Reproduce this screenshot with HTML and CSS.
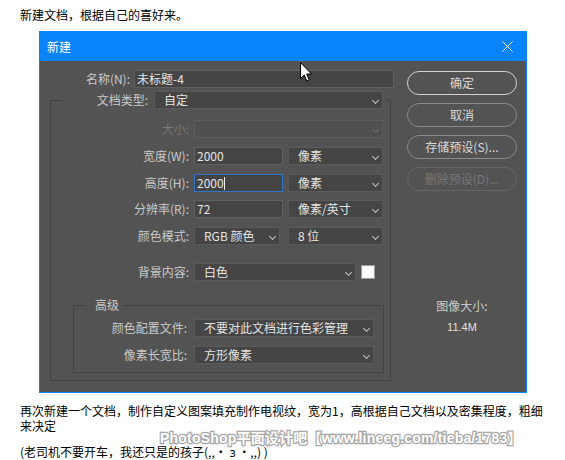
FILE: index.html
```html
<!DOCTYPE html>
<html lang="zh-CN">
<head>
<meta charset="utf-8">
<title>新建</title>
<link rel="stylesheet" href="styles.css">
</head>
<body>
<p class="intro">新建文档，根据自己的喜好来。</p>

<div class="dialog">
  <div class="titlebar">
    <span class="title">新建</span>
    <svg class="close" width="11" height="11" viewBox="0 0 11 11"><path d="M0.5 0.5 L10.5 10.5 M10.5 0.5 L0.5 10.5" stroke="#fff" stroke-width="1" fill="none"/></svg>
  </div>
  <div class="dlg-body">
    <div class="main">
      <div class="row name-row">
        <span class="lbl lbl-name">名称(N):</span>
        <div class="field input name-input">未标题-4</div>
      </div>

      <fieldset class="preset">
        <legend class="legend-row">
          <span class="lbl lbl-type">文档类型:</span>
          <div class="field select type-select">自定<i class="chev"></i></div>
        </legend>

        <div class="rows">
          <div class="row">
            <span class="lbl lbl-in disabled-text">大小:</span>
            <div class="field select disabled size-select"><i class="chev"></i></div>
          </div>
          <div class="row">
            <span class="lbl lbl-in">宽度(W):</span>
            <div class="field input num">2000</div>
            <div class="field select unit">像素<i class="chev"></i></div>
          </div>
          <div class="row">
            <span class="lbl lbl-in">高度(H):</span>
            <div class="field input num focus">2000<span class="caret"></span></div>
            <div class="field select unit">像素<i class="chev"></i></div>
          </div>
          <div class="row">
            <span class="lbl lbl-in">分辨率(R):</span>
            <div class="field input num">72</div>
            <div class="field select unit">像素/英寸<i class="chev"></i></div>
          </div>
          <div class="row">
            <span class="lbl lbl-in">颜色模式:</span>
            <div class="field select mode">RGB 颜色<i class="chev"></i></div>
            <div class="field select unit">8 位<i class="chev"></i></div>
          </div>
        </div>

        <div class="row bg-row">
          <span class="lbl lbl-in">背景内容:</span>
          <div class="field select bg-select">白色<i class="chev"></i></div>
          <span class="swatch"></span>
        </div>

        <fieldset class="adv">
          <legend class="adv-legend">高级</legend>
          <div class="row">
            <span class="lbl lbl-adv">颜色配置文件:</span>
            <div class="field select adv-select">不要对此文档进行色彩管理<i class="chev"></i></div>
          </div>
          <div class="row">
            <span class="lbl lbl-adv">像素长宽比:</span>
            <div class="field select adv-select">方形像素<i class="chev"></i></div>
          </div>
        </fieldset>
      </fieldset>
    </div>

    <div class="side">
      <div class="btn primary">确定</div>
      <div class="btn">取消</div>
      <div class="btn">存储预设(S)...</div>
      <div class="btn disabled">删除预设(D)...</div>
      <div class="img-size">
        <span class="img-size-lbl">图像大小:</span>
        <span class="img-size-val">11.4M</span>
      </div>
    </div>
  </div>
</div>

<div class="notes">
  <p class="note1">再次新建一个文档，制作自定义图案填充制作电视纹，宽为1，高根据自己文档以及密集程度，粗细来决定</p>
  <p class="note2">(老司机不要开车，我还只是的孩子(,,• з •,,) )</p>
</div>

<div class="watermark">PhotoShop平面设计吧【www.lineeg.com/tieba/1783】</div>

<svg class="pointer" width="13" height="20" viewBox="0 0 13 20">
  <path d="M0.5 0.5 L0.5 16.5 L4.2 13 L6.8 19 L9.2 18 L6.7 12 L11.5 12 Z" fill="#fff" stroke="#000" stroke-width="1" stroke-linejoin="round"/>
</svg>
</body>
</html>
```

FILE: styles.css
```css
* { box-sizing: border-box; }

body {
  margin: 0;
  width: 565px;
  height: 460px;
  overflow: hidden;
  position: relative;
  background: #fff;
  font-family: "Noto Sans CJK SC", "Liberation Sans", sans-serif;
  font-size: 12px;
  color: #000;
}

.intro {
  margin: 7px 0 0 20px;
  line-height: 16px;
}

.dialog {
  margin: 8px 0 0 39px;
  width: 488px;
  height: 362px;
  border: 1px solid #0a84fb;
  background: #535353;
  display: flex;
  flex-direction: column;
}

.titlebar {
  height: 29px;
  flex: none;
  background: #0a84fb;
  display: flex;
  align-items: center;
  justify-content: space-between;
  padding: 0 13px 0 7px;
}

.title {
  color: #fff;
  font-size: 12px;
  line-height: 14px;
}

.close { display: block; }

.dlg-body {
  flex: 1;
  display: flex;
  padding: 9px 9px 0 0;
}

.main {
  width: 354px;
  flex: none;
}

.row {
  display: flex;
  align-items: center;
  height: 18px;
  gap: 5px;
}

.lbl {
  flex: none;
  text-align: right;
  color: #c9c9c9;
  line-height: 14px;
  white-space: nowrap;
}

.disabled-text { color: #777; }

.lbl-name { width: 90px; }
.name-row { gap: 4px; }
.name-input { width: 260px; padding-left: 3px; }

.field {
  position: relative;
  height: 18px;
  border: 1px solid #606060;
  background: #444;
  color: #e4e4e4;
  line-height: 16px;
  white-space: nowrap;
  font-size: 12px;
}

.input { padding-left: 2px; }
.select {
  padding-left: 9px;
  border-color: #5a5a5a;
  background: #454545;
}

.select.disabled {
  background: #505050;
  border-color: #5c5c5c;
}

.chev {
  position: absolute;
  right: 4px;
  top: 6px;
  width: 5px;
  height: 5px;
  border-right: 1px solid #c2c2c2;
  border-bottom: 1px solid #c2c2c2;
  transform: rotate(45deg);
  transform-origin: center;
}

.disabled .chev { border-color: #6c6c6c; }

.focus { border-color: #2f74c7; }

.caret {
  display: inline-block;
  width: 1px;
  height: 13px;
  background: #f0f0f0;
  vertical-align: -2px;
}

/* preset fieldset */
.preset {
  margin: 3px 0 0 10px;
  padding: 11px 0 7px 0;
  width: 341px;
  border: 1px solid #434343;
  min-width: 0;
}

.legend-row {
  margin-left: 11px;
  padding: 0 4px 0 0;
  width: 325px;
  display: flex;
  align-items: center;
  gap: 6px;
  height: 18px;
}

.lbl-type { width: 86px; }
.type-select { width: 229px; }

.rows {
  display: flex;
  flex-direction: column;
  gap: 8.75px;
}

.lbl-in { width: 138px; }
.size-select { width: 189px; }
.num { width: 89px; }
.unit { width: 95px; }
.mode { width: 86px; margin-right: 3px; }

.bg-row { margin-top: 18px; }
.bg-select { width: 162px; }

.swatch {
  width: 14px;
  height: 14px;
  background: #fff;
  border: 1px solid #9a9a9a;
  flex: none;
}

/* advanced fieldset */
.adv {
  margin: 17px 6px 0 22px;
  padding: 7px 8px 8px 0;
  border: 1px solid #434343;
  min-width: 0;
  display: flex;
  flex-direction: column;
  gap: 9px;
}

.adv-legend {
  margin-left: 12px;
  padding: 0 4px 0 9px;
  color: #c9c9c9;
  line-height: 14px;
  font-size: 12px;
}

.adv .row { gap: 7px; }
.lbl-adv { width: 113px; }
.adv-select { width: 180px; }

/* side */
.side {
  margin: 1px 0 0 13px;
  width: 110px;
  flex: none;
  display: flex;
  flex-direction: column;
  align-items: stretch;
  gap: 8px;
}

.btn {
  height: 24px;
  border-radius: 12px;
  border: 1px solid #8a8a8a;
  color: #d9d9d9;
  text-align: center;
  line-height: 22px;
  font-size: 12px;
}

.btn.primary {
  border: 1.5px solid #d2d2d2;
  line-height: 21px;
}

.btn.disabled {
  border-color: #666;
  color: #777;
}

.img-size {
  margin-top: 100px;
  display: flex;
  flex-direction: column;
  align-items: center;
  gap: 7px;
}

.img-size-lbl {
  color: #cbcbcb;
  line-height: 14px;
}

.img-size-val {
  color: #e0e0e0;
  line-height: 14px;
  font-family: "Liberation Sans", sans-serif;
  font-size: 11px;
}

/* notes */
.notes {
  margin: 10px 0 0 20px;
  width: 525px;
}

.notes p {
  margin: 0;
  line-height: 15px;
}

.note2 { margin-top: 11px !important; }

.watermark {
  position: absolute;
  left: 160px;
  top: 430px;
  font-family: "Liberation Sans", "Noto Sans CJK SC", sans-serif;
  font-weight: bold;
  font-size: 14px;
  line-height: 16px;
  color: #fff;
  -webkit-text-stroke: 2.5px #a8a8a8;
  paint-order: stroke fill;
  letter-spacing: 0.2px;
  white-space: nowrap;
}

.pointer {
  position: absolute;
  left: 300px;
  top: 62px;
}
```
